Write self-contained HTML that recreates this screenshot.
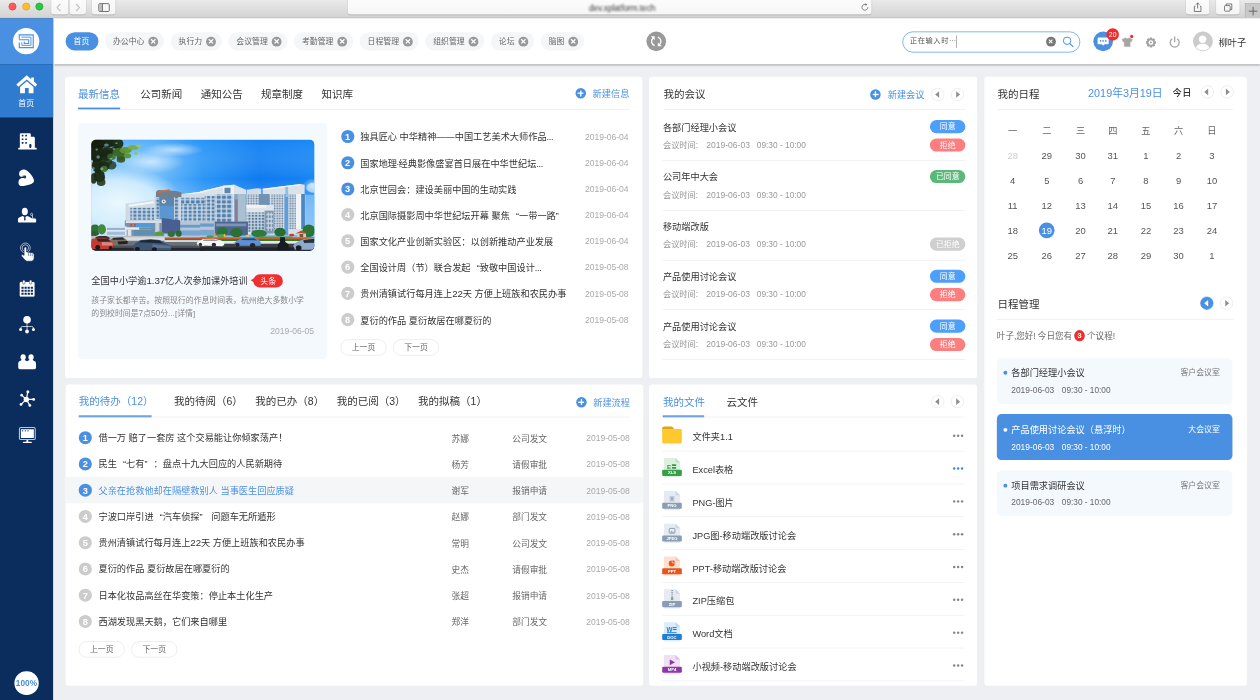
<!DOCTYPE html>
<html lang="zh-CN">
<head>
<meta charset="utf-8">
<title>首页</title>
<style>
*{box-sizing:border-box;margin:0;padding:0}
html,body{width:1260px;height:700px;overflow:hidden;background:#eeeff2}
body{font-family:"Liberation Sans","Noto Sans CJK SC",sans-serif;color:#333;font-size:14px;-webkit-font-smoothing:antialiased}
#app{position:absolute;left:0;top:0;width:1920px;height:1067px;transform:scale(.65625);transform-origin:0 0;background:#eeeff2;overflow:hidden}
.abs{position:absolute}
svg{display:block;overflow:visible}
svg text{font-family:"Liberation Sans","Noto Sans CJK SC",sans-serif}
/* chrome */
#chrome{position:absolute;left:0;top:0;width:1920px;height:27.4px;background:linear-gradient(#ebeaeb,#d5d4d5);border-bottom:1.2px solid #bcbbbc;z-index:30}
#chrome .tl{position:absolute;top:4px;width:12px;height:12px;border-radius:50%}
#chrome .btn{position:absolute;top:-6px;height:28.6px;border-radius:6px;background:linear-gradient(#fdfdfd,#f4f4f4);border:1px solid #d2d2d2;border-bottom-color:#b9b9b9;box-shadow:0 .6px 1px rgba(0,0,0,.12)}
#chrome .url{position:absolute;left:529px;top:-6px;width:800px;height:28.6px;border-radius:6px;background:linear-gradient(#fdfdfd,#f6f6f6);border:1px solid #d2d2d2;border-bottom-color:#b9b9b9;box-shadow:0 .6px 1px rgba(0,0,0,.12);text-align:center;font-size:12.5px;line-height:22px;color:#333}
#chrome .url span{filter:blur(1.3px);position:relative;top:5.5px;left:19px}
/* sidebar */
#side{position:absolute;left:0;top:28px;width:80.5px;height:1040px;background:#0a2d5e;z-index:20;box-shadow:1.6px 0 0 #fbfaf9}
#side .logo{position:absolute;left:0;top:0;width:80.5px;height:70px;background:#4a90e2}
#side .home{position:absolute;left:0;top:70px;width:80.5px;height:81px;background:#2f7bd0}
#side .home span{position:absolute;left:0;top:52px;width:80px;text-align:center;color:#fff;font-size:12px;line-height:16px}
#side .ic{position:absolute;left:0;width:80px;height:56px}
#side .ic svg{position:absolute;left:26px;top:14px}
#side .pct{position:absolute;left:22px;top:994.5px;width:36.6px;height:36.6px;border-radius:50%;background:#fff;color:#4a90e2;font-size:12.6px;font-weight:bold;text-align:center;line-height:37px}
/* topbar */
#top{position:absolute;left:80px;top:28px;width:1840px;height:70px;background:#fff;box-shadow:0 1px 3px rgba(0,0,0,.42);z-index:10}
.pill{position:absolute;top:21px;height:28px;border-radius:14px;background:#f5f6f8;color:#666;font-size:12px;line-height:28px;padding-left:12px;white-space:nowrap}
.pill.on{background:#4a90e2;color:#fff}
.pill i{position:absolute;right:9.5px;top:6.5px;width:15px;height:15px;border-radius:50%;background:#999}
.pill i:before,.pill i:after{content:"";position:absolute;left:3px;top:6.75px;width:9px;height:1.5px;background:#fff;transform:rotate(45deg)}
.pill i:after{transform:rotate(-45deg)}
/* cards */
.card{position:absolute;background:#fff;border-radius:5px}
.hline{position:absolute;left:20px;right:20px;top:49px;height:1px;background:#e8eaed}
.tab{position:absolute;top:0;height:50px;line-height:54px;font-size:16px;color:#333;white-space:nowrap}
.tab.on{color:#4a90e2}
.tab.on:after{content:"";position:absolute;left:0;right:0;bottom:0;height:3px;background:#3f88e0}
.newlink{position:absolute;top:0;height:50px;line-height:54px;font-size:14px;color:#4a90e2;white-space:nowrap}
.plus{position:absolute;top:18.5px;width:16px;height:16px;border-radius:50%;background:#4a90e2}
.plus:before,.plus:after{content:"";position:absolute;background:#fff}
.plus:before{left:3.5px;top:7px;width:9px;height:2px}
.plus:after{left:7px;top:3.5px;width:2px;height:9px}
.arr{position:absolute;width:20px;height:20px;border-radius:50%;background:#fff;border:1px solid #e3e5e8}
.arr:after{content:"";position:absolute;top:4px;border:5px solid transparent}
.arr.l:after{border-right:6.5px solid #8e8e8e;border-left-width:0;left:4.5px}
.arr.r:after{left:7px;border-left:6.5px solid #8e8e8e;border-right-width:0}
.arr.fill{background:#4a90e2;border-color:#4a90e2}
.arr.fill.l:after{border-right-color:#fff}
.num{position:absolute;width:20px;height:20px;border-radius:50%;background:#ccc;color:#fff;font-size:14px;font-weight:bold;text-align:center;line-height:20px}
.num.b{background:#4a90e2}
.row{position:absolute;left:0;right:0;height:40px;line-height:40px;white-space:nowrap}
.row .t{position:absolute;font-size:14px;color:#333}
.row .d{position:absolute;right:21px;top:.3px;font-size:13px;color:#aaa}
.pg{display:block;position:absolute;width:70px;height:24.5px;border:1px solid #e3e5e8;border-radius:12px;font-size:12px;color:#666;text-align:center;line-height:22px;background:#fff}
.q{display:inline-block;width:1em}
.q.l{text-align:right}
.el{letter-spacing:-.6px}
.dg{font-size:1.06em;line-height:1;letter-spacing:-.15px}
a{text-decoration:none}
button{font-family:inherit;padding:0;margin:0;border:0;cursor:pointer;-webkit-appearance:none;appearance:none;display:block}
.mb{right:0;width:54px;height:20px;border-radius:10px;color:#fff;font-size:12px;line-height:20px;text-align:center}

</style>
</head>
<body>
<div id="app">

<div id="chrome">
  <div class="tl" style="left:13px;background:#fc5b57;border:.5px solid #e2463f"></div>
  <div class="tl" style="left:33.5px;background:#fdbc2e;border:.5px solid #dfa023"></div>
  <div class="tl" style="left:53.5px;background:#28c840;border:.5px solid #1fa82f"></div>
  <div class="btn" style="left:77px;width:27.5px">
    <svg width="24" height="24" viewBox="0 0 24 24" style="position:absolute;left:0;top:4px"><path d="M14 7 L9 12.5 L14 18" fill="none" stroke="#bdbdbd" stroke-width="1.6"/></svg>
  </div>
  <div class="btn" style="left:104.5px;width:27.5px">
    <svg width="24" height="24" viewBox="0 0 24 24" style="position:absolute;left:0;top:4px"><path d="M10 7 L15 12.5 L10 18" fill="none" stroke="#bdbdbd" stroke-width="1.6"/></svg>
  </div>
  <div class="btn" style="left:138.5px;width:38.5px">
    <svg width="35" height="24" viewBox="0 0 35 24" style="position:absolute;left:0;top:4px"><rect x="10.5" y="6.5" width="16" height="12" rx="1.5" fill="none" stroke="#666" stroke-width="1.4"/><rect x="11.2" y="7.2" width="4.6" height="10.6" fill="#bbb"/><path d="M16.2 6.5 V18.5" stroke="#666" stroke-width="1.3"/></svg>
  </div>
  <div class="url"><span>dev.xplatform.tech</span>
    <svg width="14" height="14" viewBox="0 0 14 14" style="position:absolute;right:3.5px;top:8.5px"><path d="M11.5 7 A4.5 4.5 0 1 1 9.2 3.1" fill="none" stroke="#666" stroke-width="1.2"/><path d="M8 0.8 L10.6 3.2 L7.6 4.6 Z" fill="#666"/></svg>
  </div>
  <div class="btn" style="left:1806px;width:38px">
    <svg width="34" height="24" viewBox="0 0 34 24" style="position:absolute;left:1px;top:4px"><path d="M13.5 10.5 H12 V18.5 H22 V10.5 H20.5" fill="none" stroke="#666" stroke-width="1.3"/><path d="M17 14 V5.5 M14.5 8 L17 5.3 L19.5 8" fill="none" stroke="#666" stroke-width="1.3"/></svg>
  </div>
  <div class="btn" style="left:1852px;width:38px">
    <svg width="34" height="24" viewBox="0 0 34 24" style="position:absolute;left:1px;top:4px"><rect x="12" y="9.5" width="8.5" height="8.5" rx="1" fill="none" stroke="#666" stroke-width="1.3"/><path d="M14.5 9.5 V7 H23 V15.5 H20.5" fill="none" stroke="#666" stroke-width="1.3"/></svg>
  </div>
  <div style="position:absolute;left:1897px;top:5px;width:23px;height:22px;background:#c9c8c9;border:1px solid #b4b3b4;border-right:0;border-bottom:0">
    <svg width="22" height="21" viewBox="0 0 22 21" style="position:absolute;left:0;top:0"><path d="M5 11 H18 M11.5 4.5 V17.5" stroke="#666" stroke-width="1.5"/></svg>
  </div>
</div>

<aside id="side">
<div class="logo"><svg width="80" height="70" viewBox="0 0 80 70"><g transform="translate(6.095 5.524) scale(0.20434)">
<circle cx="165" cy="143" r="98" fill="#fff"/>
<g fill="none" stroke="#4a90e2" stroke-width="8.5">
<path d="M114 124 V96 H218 V191 H114 V152"/>
<path d="M130 113 H201 V174 H133 V152" stroke-width="7"/>
<path d="M110 132 H184 V160 H151 V146" stroke-width="8"/>
</g></g></svg></div>
<div class="home"><svg width="80" height="90" viewBox="0 0 80 90" style="position:absolute;left:0;top:-70px"><g transform="translate(6.095 5.524) scale(0.20434)" fill="#fff">
<path d="M170 397 L92 466 L107 483 L170 428 L233 483 L248 466 L223 444 V414 H203 V427 Z"/>
<path d="M170 441 L120 485 V531 H156 V492 H184 V531 H220 V485 Z"/></g></svg><span>首页</span></div>
<svg class="abs" style="left:15.24px;top:162.48px" width="51.81" height="106.67" viewBox="0 0 340 700"><path fill="#fff" d="M100 236 V97 Q100 85 112 85 H198 Q210 85 210 97 V120 H238 Q250 120 250 132 V236 Z"/><rect x="84" y="231" width="185" height="18" rx="5" fill="#fff"/><g fill="#0a2d5e"><rect x="119" y="100" width="17" height="17" rx="4"/><rect x="154" y="100" width="17" height="17" rx="4"/><rect x="119" y="137" width="17" height="17" rx="4"/><rect x="154" y="137" width="17" height="17" rx="4"/><rect x="119" y="174" width="17" height="17" rx="4"/><rect x="154" y="174" width="17" height="17" rx="4"/><rect x="194" y="194" width="22" height="38" rx="8"/></g><path fill="#fff" d="M93 482 C96 458 128 442 152 450 C188 462 228 510 241 552 C247 574 228 588 200 597 C170 608 122 617 102 611 C84 604 82 568 95 549 C105 535 126 530 147 536 C152 528 153 520 150 513 C140 519 124 523 111 520 C95 515 90 499 93 482 Z"/><path fill="#0a2d5e" d="M122 512 C136 506 150 505 160 511 L163 528 C158 538 150 540 146 536 C150 528 150 521 147 516 C140 519 130 518 122 512 Z"/></svg>
<svg class="abs" style="left:15.24px;top:276.76px" width="51.81" height="106.67" viewBox="0 0 340 700"><ellipse cx="150" cy="113" rx="30" ry="38" fill="#fff"/><path fill="#fff" d="M81 214 V192 C81 176 100 170 128 158 L150 172 L172 158 C196 166 212 174 224 184 H252 Q263 184 263 194 V214 Q263 223 254 223 H90 Q81 223 81 214 Z"/><path fill="#0a2d5e" d="M145 168 H155 L158 196 L150 205 L142 196 Z"/><circle cx="218" cy="142" r="11" fill="none" stroke="#fff" stroke-width="6"/><path d="M224 152 L231 186" stroke="#fff" stroke-width="7" stroke-linecap="round"/><circle cx="155" cy="478" r="49" fill="none" stroke="#fff" stroke-width="6"/><circle cx="155" cy="478" r="32" fill="none" stroke="#fff" stroke-width="6"/><path fill="#fff" stroke="#0a2d5e" stroke-width="7" stroke-linejoin="round" d="M142 482 Q142 468 155 468 Q168 468 168 482 V518 L226 526 Q243 530 243 546 V582 Q240 611 214 611 H176 Q160 611 150 599 L118 561 Q111 548 124 544 Q134 543 142 553 Z"/><path d="M186 528 V558 M206 530 V560 M224 534 V562" stroke="#0a2d5e" stroke-width="5"/></svg>
<svg class="abs" style="left:15.24px;top:383.43px" width="51.81" height="106.67" viewBox="0 0 340 700"><rect x="100" y="124" width="146" height="145" rx="12" fill="#fff"/><rect x="100" y="124" width="146" height="145" rx="12" fill="none" stroke="#fff" stroke-width="4" opacity=".6"/><g fill="#0a2d5e"><rect x="116" y="171" width="22" height="19" rx="2"/><rect x="147" y="171" width="22" height="19" rx="2"/><rect x="178" y="171" width="22" height="19" rx="2"/><rect x="209" y="171" width="22" height="19" rx="2"/><rect x="116" y="201" width="22" height="19" rx="2"/><rect x="147" y="201" width="22" height="19" rx="2"/><rect x="178" y="201" width="22" height="19" rx="2"/><rect x="209" y="201" width="22" height="19" rx="2"/><rect x="116" y="231" width="22" height="19" rx="2"/><rect x="147" y="231" width="22" height="19" rx="2"/><rect x="178" y="231" width="22" height="19" rx="2"/><rect x="209" y="231" width="22" height="19" rx="2"/></g><g stroke="#0a2d5e" stroke-width="5" fill="#fff"><rect x="128" y="104" width="24" height="40" rx="12"/><rect x="196" y="104" width="24" height="40" rx="12"/></g><circle cx="172" cy="500" r="38" fill="#fff"/><path d="M172 530 V605 M109 592 V585 Q109 568 126 568 H218 Q236 568 236 585 V592" fill="none" stroke="#fff" stroke-width="7"/><circle cx="108" cy="598" r="15" fill="#fff"/><circle cx="172" cy="618" r="19" fill="#fff"/><circle cx="236" cy="598" r="15" fill="#fff"/></svg>
<svg class="abs" style="left:15.24px;top:490.10px" width="51.81" height="106.67" viewBox="0 0 340 700"><ellipse cx="133" cy="173" rx="26" ry="31" fill="#fff"/><ellipse cx="212" cy="173" rx="26" ry="31" fill="#fff"/><path fill="#fff" d="M84 276 V232 Q84 214 102 210 L118 200 H148 L172 214 L196 200 H228 L244 210 Q262 214 262 232 V276 Q262 292 246 292 H100 Q84 292 84 276 Z"/><path d="M165 595 L180 518 M165 595 L118 552 M165 595 L238 595 M165 595 L112 645 M165 595 L200 655" stroke="#fff" stroke-width="12" fill="none"/><circle cx="165" cy="595" r="27" fill="#fff"/><circle cx="180" cy="518" r="15" fill="#fff"/><circle cx="118" cy="552" r="13" fill="#fff"/><circle cx="238" cy="595" r="14" fill="#fff"/><circle cx="112" cy="645" r="14" fill="#fff"/><circle cx="200" cy="655" r="14" fill="#fff"/></svg>
<svg class="abs" style="left:15.24px;top:596.76px" width="51.81" height="106.67" viewBox="0 0 340 700"><rect x="96" y="174" width="158" height="120" rx="14" fill="none" stroke="#fff" stroke-width="11" opacity=".72"/><rect x="110" y="190" width="130" height="88" rx="3" fill="#fff"/><circle cx="128" cy="207" r="7" fill="#0a2d5e"/><circle cx="155" cy="207" r="7" fill="#0a2d5e"/><circle cx="182" cy="207" r="7" fill="#0a2d5e"/><rect x="166" y="298" width="18" height="24" fill="#fff"/><rect x="130" y="316" width="90" height="13" rx="6" fill="#fff"/></svg>
<div class="pct">100%</div>
</aside>

<header id="top">
<a href="#" class="pill on" style="left:20px;width:50px">首页</a>
<a href="#" class="pill" style="left:80px;width:90px">办公中心<i></i></a>
<a href="#" class="pill" style="left:180px;width:78px">执行力<i></i></a>
<a href="#" class="pill" style="left:268px;width:90px">会议管理<i></i></a>
<a href="#" class="pill" style="left:368px;width:90px">考勤管理<i></i></a>
<a href="#" class="pill" style="left:468px;width:90px">日程管理<i></i></a>
<a href="#" class="pill" style="left:568px;width:90px">组织管理<i></i></a>
<a href="#" class="pill" style="left:668px;width:66px">论坛<i></i></a>
<a href="#" class="pill" style="left:744px;width:66px">脑图<i></i></a>

<div class="abs" style="left:905px;top:20px;width:30px;height:30px;border-radius:50%;background:#999">
  <svg width="30" height="30" viewBox="0 0 30 30"><g transform="rotate(-90 15 15)"><path d="M8.4 12.6 A7 7 0 0 1 20.2 10.2 M21.6 17.4 A7 7 0 0 1 9.8 19.8" fill="none" stroke="#fff" stroke-width="2"/><path d="M22.6 6.6 V12.6 H16.6 Z M7.4 23.4 V17.4 H13.4 Z" fill="#fff"/></g></svg>
</div>
<div class="abs" style="left:1295px;top:20px;width:271px;height:32px;border-radius:16px;border:1.5px solid #4a90e2;background:#fff">
  <span class="abs" style="left:10.5px;top:-1.2px;line-height:29px;font-size:11px;color:#555;letter-spacing:.9px;white-space:nowrap">正在输入时<span style="position:relative;top:-3px;letter-spacing:-.5px">…</span></span>
  <span class="abs" style="left:81px;top:4.5px;width:1px;height:19px;background:#888"></span>
  <span class="abs" style="left:218px;top:7px;width:14.5px;height:14.5px;border-radius:50%;background:#777"></span>
  <svg class="abs" style="left:218.2px;top:7.2px" width="14" height="14" viewBox="0 0 14 14"><path d="M4.3 4.3 L9.7 9.7 M9.7 4.3 L4.3 9.7" stroke="#fff" stroke-width="1.6"/></svg>
  <svg class="abs" style="left:241.5px;top:4.6px" width="19" height="19" viewBox="0 0 20 20"><circle cx="8.5" cy="8.5" r="6" fill="none" stroke="#4a90e2" stroke-width="1.6"/><path d="M13 13 L18 18" stroke="#4a90e2" stroke-width="1.8" stroke-linecap="round"/></svg>
</div>
<div class="abs" style="left:1585.6px;top:20.2px;width:30px;height:30px;border-radius:50%;background:#4a90e2">
  <svg width="30" height="30" viewBox="0 0 30 30"><path d="M8.2 9 H21.8 Q23.4 9 23.4 10.6 V18 Q23.4 19.6 21.8 19.6 H17 L15 21.8 L13 19.6 H8.2 Q6.6 19.6 6.6 18 V10.6 Q6.6 9 8.2 9 Z" fill="#fff"/><rect x="10" y="13" width="2" height="2.8" rx=".6" fill="#4a90e2"/><rect x="14" y="13" width="2" height="2.8" rx=".6" fill="#4a90e2"/><rect x="18" y="13" width="2" height="2.8" rx=".6" fill="#4a90e2"/></svg>
</div>
<div class="abs" style="left:1606px;top:15.3px;width:19px;height:19px;border-radius:50%;background:#f02b2b;color:#fff;font-size:10.5px;line-height:19px;text-align:center">20</div>
<svg class="abs" style="left:1629px;top:28.4px" width="18" height="16.5" viewBox="0 0 24 22"><path d="M8 2 C9 4.5 14 4.5 15 2 L22 5.5 L19.5 10.5 L17.5 9.6 V20 H5.5 V9.6 L3.5 10.5 L1 5.5 Z" fill="#a5a5a5" stroke="#a5a5a5" stroke-width="1" stroke-linejoin="round"/></svg>
<div class="abs" style="left:1641.7px;top:25px;width:5.2px;height:5.2px;border-radius:50%;background:#f02b2b"></div>
<svg class="abs" style="left:1665.1px;top:27.6px" width="17.6" height="17.6" viewBox="0 0 22 22"><path d="M17.42 9.46 L19.49 9.65 L19.49 12.35 L17.42 12.54 L16.63 14.45 L17.96 16.05 L16.05 17.96 L14.45 16.63 L12.54 17.42 L12.35 19.49 L9.65 19.49 L9.46 17.42 L7.55 16.63 L5.95 17.96 L4.04 16.05 L5.37 14.45 L4.58 12.54 L2.51 12.35 L2.51 9.65 L4.58 9.46 L5.37 7.55 L4.04 5.95 L5.95 4.04 L7.55 5.37 L9.46 4.58 L9.65 2.51 L12.35 2.51 L12.54 4.58 L14.45 5.37 L16.05 4.04 L17.96 5.95 L16.63 7.55 Z" fill="#a3a3a3" stroke="#a3a3a3" stroke-width="2.2" stroke-linejoin="round"/><circle cx="11" cy="11" r="4.5" fill="#fff"/><circle cx="11" cy="11" r="1.9" fill="#a3a3a3"/></svg>
<svg class="abs" style="left:1699.6px;top:25.8px" width="20" height="19.6" preserveAspectRatio="none" viewBox="0 0 22 22"><path d="M6.4 6.2 A7.6 7.6 0 1 0 15.6 6.2" fill="none" stroke="#a3a3a3" stroke-width="2.1" stroke-linecap="round"/><path d="M11 2.4 V10.6" stroke="#a3a3a3" stroke-width="2.1" stroke-linecap="round"/></svg>
<div class="abs" style="left:1738px;top:20px;width:30px;height:30px;border-radius:50%;background:#ccc;overflow:hidden;border:1.5px solid #c4c4c4">
  <svg width="27" height="27" viewBox="0 0 30 30"><circle cx="15" cy="12" r="6.2" fill="#fff"/><path d="M3 31 C3 22 9 19.5 15 19.5 C21 19.5 27 22 27 31 Z" fill="#fff"/></svg>
</div>
<div class="abs" style="left:1777px;top:0;line-height:74px;font-size:14px;color:#333;white-space:nowrap">柳叶子</div>
</header>

<section class="card" style="left:98.9px;top:117px;width:879.9px;height:459px">
<a href="#" class="tab on" style="left:20px">最新信息</a>
<a href="#" class="tab" style="left:115px">公司新闻</a>
<a href="#" class="tab" style="left:207px">通知公告</a>
<a href="#" class="tab" style="left:299px">规章制度</a>
<a href="#" class="tab" style="left:391px">知识库</a>
<div class="plus" style="left:777.9px;top:17.2px"></div><a href="#" class="newlink" style="left:804.1px;line-height:52.6px">新建信息</a>
<div class="hline"></div>
<div class="abs" style="left:20.3px;top:70px;width:379.3px;height:359.5px;border-radius:6px;background:#f4f9fe">
  <div class="abs" style="left:20px;top:26px;width:340px;height:169px;border-radius:7px;overflow:hidden;background:#6ab0ee"><svg width="340" height="169" viewBox="0 0 223 111" preserveAspectRatio="none">
<defs>
<linearGradient id="sky" x1="0" y1="0" x2="1" y2="0"><stop offset="0" stop-color="#8fcdfb"/><stop offset=".3" stop-color="#6fbcfa"/><stop offset=".5" stop-color="#2b96f6"/><stop offset=".75" stop-color="#0d7af0"/><stop offset="1" stop-color="#1684f3"/></linearGradient>
<linearGradient id="skyv" x1="0" y1="0" x2="0" y2="1"><stop offset="0" stop-color="#1a90fa" stop-opacity=".35"/><stop offset=".35" stop-color="#fff" stop-opacity="0"/><stop offset=".62" stop-color="#fff" stop-opacity=".3"/><stop offset="1" stop-color="#fff" stop-opacity=".55"/></linearGradient>
<radialGradient id="hz" cx=".5" cy=".5" r=".5"><stop offset="0" stop-color="#eaf8fe" stop-opacity="1"/><stop offset=".6" stop-color="#dff3fd" stop-opacity=".8"/><stop offset="1" stop-color="#d5effc" stop-opacity="0"/></radialGradient>
<radialGradient id="cl" cx=".5" cy=".5" r=".5"><stop offset="0" stop-color="#fff" stop-opacity=".6"/><stop offset="1" stop-color="#fff" stop-opacity="0"/></radialGradient>
<filter id="b1" x="-10%" y="-10%" width="120%" height="120%"><feGaussianBlur stdDeviation=".7"/></filter>
<filter id="b3" x="-5%" y="-5%" width="110%" height="110%"><feGaussianBlur stdDeviation=".3"/></filter>
<filter id="b2" x="-10%" y="-10%" width="120%" height="120%"><feGaussianBlur stdDeviation=".35"/></filter>
<pattern id="wA" width="4.6" height="3.7" patternUnits="userSpaceOnUse"><rect width="4.6" height="3.7" fill="#d3dde6"/><rect x=".7" y=".6" width="3.2" height="2.6" fill="#4f7fae"/></pattern>
<pattern id="wB" width="3.4" height="3.1" patternUnits="userSpaceOnUse"><rect width="3.4" height="3.1" fill="#d6dfe7"/><rect x=".6" y=".6" width="2.2" height="2.1" fill="#55789c"/></pattern>
<pattern id="wC" width="2.6" height="2.5" patternUnits="userSpaceOnUse"><rect width="2.6" height="2.5" fill="#e2e8ee"/><rect x=".5" y=".5" width="1.6" height="1.6" fill="#5d7a9a"/></pattern>
<pattern id="wD" width="5.2" height="4.6" patternUnits="userSpaceOnUse"><rect width="5.2" height="4.6" fill="#d0dae4"/><rect x=".7" y=".7" width="3.9" height="3.3" fill="#4f80b0"/></pattern>
<pattern id="wE" width="3" height="4.4" patternUnits="userSpaceOnUse"><rect width="3" height="4.4" fill="#cdd6de"/><rect x=".6" y=".8" width="1.8" height="2.8" fill="#6a8fae"/></pattern>
</defs>
<rect width="223" height="111" fill="url(#sky)"/>
<rect width="223" height="111" fill="url(#skyv)"/>
<ellipse cx="28" cy="62" rx="62" ry="36" fill="url(#hz)"/>
<ellipse cx="60" cy="22" rx="34" ry="12" fill="url(#cl)"/>
<ellipse cx="82" cy="10" rx="30" ry="7" fill="url(#cl)"/>
<ellipse cx="222" cy="46" rx="11" ry="8" fill="url(#cl)"/><ellipse cx="222" cy="48" rx="7" ry="5" fill="#fff" opacity=".5"/>
<rect x="205" y="55" width="18" height="40" fill="#9fd2f8" opacity=".55"/>

<g filter="url(#b3)">
<polygon points="171.4,49.1 209.1,44.3 213.3,45.1 213.3,57.2 171.4,57.2" fill="#dae2e9"/>
<rect x="178.8" y="54.3" width="35.0" height="40.5" fill="#dde4eb"/>
<rect x="179.7" y="54.3" width="12.4" height="38.7" fill="url(#wC)"/>
<rect x="193.0" y="54.3" width="4.1" height="41.0" fill="#5f9ed6"/>
<rect x="197.2" y="54.3" width="7.4" height="35.9" fill="url(#wC)"/>
<rect x="204.5" y="54.3" width="5.1" height="35.0" fill="#f1f4f6"/>
<rect x="209.9" y="54.3" width="3.7" height="35.0" fill="#4a86c4"/>
<rect x="197.2" y="89.3" width="12.9" height="5.5" fill="#d9dfe5"/>
<polygon points="171.4,49.1 209.1,44.3 209.1,45.4 171.4,50.2" fill="#f4f7f9"/>
<rect x="194.0" y="47.1" width="2.8" height="10.1" fill="#8fc0e6"/>
<polygon points="155.3,50.0 165.9,48.5 170.0,49.1 170.0,57.2 155.3,57.2" fill="#d3dce5"/>
<rect x="154.8" y="54.3" width="23.9" height="11.0" fill="url(#wC)"/>
<rect x="167.7" y="54.3" width="10.1" height="11.0" fill="#6f93b4"/>
<rect x="154.8" y="65.2" width="27.6" height="29.6" fill="#dfe5ea"/>
<rect x="155.3" y="72.7" width="18.0" height="19.3" fill="url(#wB)"/>
<rect x="173.2" y="70.9" width="9.2" height="23.0" fill="#7f9bb6"/>
<rect x="175.1" y="72.7" width="6.4" height="18.4" fill="url(#wE)"/>
<rect x="154.8" y="65.2" width="20.3" height="2.9" fill="#f0f3f5"/>
<polygon points="108.8,51.7 131.8,46.2 142.9,44.8 147.5,47.1 154.8,49.9 154.8,57.2 108.8,57.2" fill="#d9e1e9"/>
<polygon points="108.8,51.7 131.8,46.2 131.8,47.6 108.8,53.2" fill="#f5f7f9"/>
<rect x="131.8" y="45.7" width="11.0" height="11.5" fill="#eef2f5"/>
<rect x="133.2" y="48.0" width="6.0" height="5.5" fill="#5f87a6"/>
<rect x="108.8" y="54.3" width="34.1" height="30.4" fill="#d9e1e9"/>
<rect x="108.8" y="56.1" width="14.7" height="27.6" fill="url(#wA)"/>
<rect x="124.0" y="54.3" width="17.0" height="29.5" fill="url(#wD)"/>
<rect x="142.9" y="54.3" width="12.0" height="36.8" fill="#8ea7be"/>
<rect x="143.8" y="59.8" width="3.7" height="22.1" fill="#8a4a4a" opacity=".45"/>
<rect x="146.5" y="54.3" width="7.8" height="30.4" fill="#a9bfd2"/>
<polygon points="90.2,54.5 113.0,51.5 113.0,57.7 90.2,57.7" fill="#d9e1e9"/>
<polygon points="90.2,54.5 113.0,51.5 113.0,52.6 90.2,55.6" fill="#f5f7f9"/>
<rect x="88.9" y="54.3" width="24.4" height="27.6" fill="#d9e1e9"/>
<rect x="89.8" y="58.0" width="23.5" height="7.4" fill="url(#wD)"/>
<rect x="89.8" y="64.4" width="23.5" height="17.5" fill="url(#wA)"/>
<rect x="88.9" y="54.3" width="24.4" height="2.8" fill="#d3dce5"/>
<rect x="75.1" y="81.9" width="38.2" height="15.2" fill="#b7c5d4"/>
<rect x="76.0" y="85.1" width="37.3" height="2.8" fill="#6b9ccb"/>
<rect x="76.0" y="90.7" width="37.3" height="5.1" fill="#78a6d2"/>
<rect x="108.8" y="81.9" width="14.7" height="14.7" fill="#b7c5d4"/>
<rect x="108.8" y="83.8" width="13.8" height="3.2" fill="#6b9ccb"/>
<rect x="108.8" y="90.2" width="13.8" height="5.5" fill="#78a6d2"/>
<rect x="123.5" y="81.9" width="33.1" height="13.8" fill="#50658f"/>
<rect x="124.5" y="83.8" width="30.4" height="2.8" fill="#7f93b5"/>
<polygon points="63.1,57.1 67.7,54.3 88.9,54.3 88.9,81.9 63.1,81.9" fill="#d3dce5"/>
<rect x="68.1" y="56.1" width="14.7" height="23.5" fill="#5a96cf"/>
<rect x="68.1" y="56.1" width="14.7" height="10.1" fill="#5a86ae"/>
<rect x="64.0" y="58.0" width="3.7" height="21.2" fill="url(#wA)"/>
<rect x="83.3" y="55.2" width="4.6" height="24.9" fill="url(#wA)"/>
<polygon points="64.7,52.2 66.8,50.3 85.2,51.2 90.2,52.6 90.2,57.2 64.7,57.2" fill="#6f7f8f"/>
<polygon points="65.4,51.7 78.7,49.5 78.9,51.0 65.7,53.4" fill="#d8693a"/>
<ellipse cx="72.5" cy="61.7" rx="2.0" ry="2.0" fill="#f2f4f6"/>
<ellipse cx="72.5" cy="61.7" rx="0.9" ry="0.9" fill="#e0453a"/>
<polygon points="34.5,64.0 63.1,59.8 63.1,81.9 34.5,81.9" fill="#d3dce5"/>
<polygon points="35.9,65.3 62.6,61.5 62.6,63.5 35.9,67.2" fill="#f3f6f8"/>
<rect x="39.1" y="68.1" width="23.9" height="12.0" fill="url(#wA)"/>
<rect x="34.5" y="64.0" width="2.8" height="21.6" fill="#cfd8e0"/>
<rect x="33.6" y="80.5" width="36.8" height="15.7" fill="#7d90a8"/>
<rect x="34.5" y="80.5" width="35.9" height="2.8" fill="#d8dfe6"/>
<rect x="44.7" y="83.6" width="17.5" height="4.3" fill="#4f9bd8"/>
<rect x="42.8" y="89.7" width="20.3" height="6.4" fill="#5f8fb0"/>
<rect x="32.7" y="87.6" width="27.6" height="2.4" fill="#e9edf0"/>
<rect x="47.9" y="87.6" width="13.3" height="2.4" fill="#7b8794"/>
<rect x="36.4" y="90.0" width="3.7" height="6.2" fill="#dfe4e8"/>
<rect x="64.0" y="82.8" width="4.1" height="10.1" fill="#c9d2da"/>
<rect x="39.1" y="84.2" width="1.8" height="2.8" fill="#c0504a"/>
<rect x="42.8" y="84.2" width="1.8" height="2.8" fill="#c0504a"/>
<polygon points="70.5,78.4 88.9,80.5 88.9,93.9 70.5,93.9" fill="#4a5f90"/>
<rect x="14.8" y="86.7" width="20.7" height="9.5" fill="#e1e7ec"/>
<rect x="15.7" y="88.2" width="18.0" height="2.0" fill="#8fb0d6"/>
<rect x="15.7" y="92.0" width="18.0" height="3.2" fill="#9fc0e0"/>
</g>
<g filter="url(#b2)">
<ellipse cx="3.7" cy="89.3" rx="5.1" ry="4.4" fill="#2f6f35"/>
<ellipse cx="10.6" cy="89.7" rx="4.1" ry="5.1" fill="#3f8a45"/>
<ellipse cx="2.3" cy="93.9" rx="5.5" ry="2.6" fill="#2a5f30"/>
<ellipse cx="68.1" cy="94.3" rx="5.1" ry="2.6" fill="#5a9a4a"/>
<ellipse cx="80.1" cy="94.3" rx="3.5" ry="2.9" fill="#2f7038"/>
<ellipse cx="87.5" cy="93.9" rx="2.9" ry="3.2" fill="#2a6a33"/>
<ellipse cx="130.9" cy="92.0" rx="5.5" ry="4.6" fill="#2c7436"/>
<ellipse cx="145.2" cy="93.0" rx="6.3" ry="4.6" fill="#2a6f34"/>
<ellipse cx="167.7" cy="93.9" rx="7.8" ry="3.9" fill="#2f7a3a"/>
<ellipse cx="188.7" cy="92.5" rx="5.7" ry="4.4" fill="#2a6d33"/>
<ellipse cx="217.4" cy="91.1" rx="6.4" ry="6.4" fill="#2c7436"/>
<ellipse cx="118.9" cy="96.8" rx="3.7" ry="1.3" fill="#4f9a48"/>
<ellipse cx="130.0" cy="96.2" rx="4.1" ry="1.8" fill="#5aa34d"/>
<polygon points="204.1,93.9 210.1,90.9 216.5,93.9" fill="#b5532c"/>
<rect x="205.9" y="93.9" width="8.7" height="3.7" fill="#d9cfc0"/>
<rect x="208.2" y="94.3" width="3.7" height="3.2" fill="#6b5a4a"/>
<ellipse cx="200.4" cy="95.3" rx="2.6" ry="1.3" fill="#d8362c"/>
<ellipse cx="123.5" cy="94.8" rx="0.9" ry="2.0" fill="#d8a020"/>
<ellipse cx="133.2" cy="95.7" rx="0.9" ry="1.7" fill="#e8c030"/>
<ellipse cx="156.2" cy="96.2" rx="2.0" ry="1.1" fill="#e8c030"/>
<rect x="73.2" y="97.8" width="40.0" height="2.6" fill="#c8502c"/>
<rect x="73.2" y="99.2" width="40.0" height="1.5" fill="#3f7f2f"/>
<rect x="108.8" y="97.6" width="114.2" height="2.5" fill="#cf5a2c"/>
<rect x="108.8" y="99.4" width="114.2" height="2.0" fill="#3a7a2c"/>
<rect x="167.7" y="96.8" width="33.1" height="1.7" fill="#4f9a3f"/>
</g>
<rect x="0.0" y="96.2" width="73.2" height="6.0" fill="#b9bec5"/>
<rect x="31.8" y="97.6" width="41.4" height="2.8" fill="#d9dcdf"/>
<rect x="0.0" y="101.7" width="113.2" height="10.1" fill="#4a4f58"/>
<rect x="108.8" y="101.3" width="114.2" height="3.2" fill="#e4e6e8"/>
<rect x="73.2" y="100.6" width="40.0" height="1.7" fill="#e4e6e8"/>
<rect x="108.8" y="104.0" width="114.2" height="7.8" fill="#3a3e46"/>
<rect x="0.0" y="108.2" width="113.2" height="3.7" fill="#25282e"/>
<rect x="108.8" y="107.7" width="114.2" height="4.1" fill="#1f2227"/>
<rect x="21.7" y="102.2" width="91.6" height="3.7" fill="#6b7079"/>
<g filter="url(#b2)">
<polygon points="18.9,100.3 21.7,98.0 31.8,97.6 35.5,100.3 36.4,103.6 34.5,104.8 19.8,104.5" fill="#7a6f62"/>
<polygon points="22.1,98.3 31.3,97.9 33.6,100.0 20.9,100.1" fill="#2a2c33"/>
<polygon points="26.3,101.7 36.4,101.3 36.4,104.0 27.2,104.8" fill="#1f2025"/>
<polygon points="4.2,97.6 7.8,96.2 15.2,96.2 18.4,98.0 18.4,99.9 4.2,99.9" fill="#3a3038"/>
<polygon points="0.0,99.9 2.3,98.7 16.1,98.7 19.8,101.4 21.8,103.1 21.8,107.7 19.8,109.4 0.0,109.4" fill="#c53a32"/>
<polygon points="5.5,99.4 16.6,99.4 19.4,101.7 6.9,102.0" fill="#3a2428"/>
<polygon points="10.6,102.2 21.2,102.9 21.5,105.9 10.6,105.7" fill="#e8c8c0" opacity=".55"/>
<ellipse cx="6.5" cy="107.7" rx="2.4" ry="2.4" fill="#1a1a1e"/>
<ellipse cx="19.4" cy="108.2" rx="1.8" ry="2.0" fill="#1a1a1e"/>
<polygon points="41.9,105.9 44.7,103.1 49.3,100.3 59.4,99.6 68.6,100.3 73.2,103.1 79.2,105.9 80.1,109.1 78.7,110.6 42.8,110.6" fill="#3d5472"/>
<polygon points="47.4,102.6 50.7,100.8 59.4,100.1 67.7,100.8 71.8,103.6" fill="#1c2735"/>
<polygon points="61.2,104.5 78.7,106.0 79.7,108.6 61.2,108.2" fill="#5a7392"/>
<ellipse cx="46.1" cy="109.4" rx="2.6" ry="2.0" fill="#14181e"/>
<ellipse cx="63.1" cy="109.5" rx="2.6" ry="2.0" fill="#14181e"/>
<polygon points="108.8,101.3 111.6,99.2 122.6,99.0 130.0,100.8 132.9,102.6 132.9,105.4 130.9,106.6 108.8,105.9" fill="#f4f5f7"/>
<polygon points="105.4,103.1 108.2,101.4 113.3,101.1 113.3,106.0 106.4,105.7" fill="#f4f5f7"/>
<polygon points="112.5,99.9 122.6,99.6 127.7,101.3 111.6,101.4" fill="#8f979f"/>
<ellipse cx="122.6" cy="105.1" rx="2.2" ry="2.0" fill="#2a2c30"/>
<ellipse cx="109.1" cy="104.8" rx="1.7" ry="1.7" fill="#2a2c30"/>
<polygon points="142.9,103.1 145.6,100.8 151.1,98.3 163.1,97.9 167.7,100.3 169.6,103.1 169.1,106.0 143.8,106.0" fill="#5f90d2"/>
<polygon points="149.3,100.3 152.1,98.7 162.7,98.5 165.9,100.5" fill="#2c4668"/>
<ellipse cx="146.1" cy="105.1" rx="2.2" ry="2.0" fill="#22252b"/>
<ellipse cx="161.3" cy="105.5" rx="2.6" ry="2.2" fill="#22252b"/>
<polygon points="188.9,97.6 193.5,97.6 194.0,102.2 197.2,104.5 197.6,110.6 186.1,110.6 186.6,104.5 188.7,102.2" fill="#161a22"/>
<polygon points="201.8,105.9 205.5,102.2 212.8,99.4 223.0,98.3 223.0,110.0 203.6,110.0" fill="#8ea9cf"/>
<polygon points="211.9,100.3 223.0,99.0 223.0,103.1 212.8,103.3" fill="#27303c"/>
<ellipse cx="207.3" cy="108.2" rx="2.9" ry="2.6" fill="#1c1e22"/>
</g>
<g filter="url(#b1)">
<ellipse cx="5.3" cy="3.9" rx="8.7" ry="6.0" fill="#121c0e" opacity="1.00"/>
<ellipse cx="17.5" cy="3.0" rx="9.8" ry="4.3" fill="#16230f" opacity="0.97"/>
<ellipse cx="26.8" cy="3.9" rx="5.4" ry="4.9" fill="#1d2e14" opacity="0.95"/>
<ellipse cx="5.3" cy="14.3" rx="7.6" ry="7.6" fill="#15210f" opacity="0.98"/>
<ellipse cx="15.6" cy="12.4" rx="7.6" ry="5.4" fill="#1b2b13" opacity="0.95"/>
<ellipse cx="7.1" cy="25.5" rx="6.5" ry="7.6" fill="#18260f" opacity="0.97"/>
<ellipse cx="15.6" cy="21.8" rx="5.4" ry="4.9" fill="#2a4519" opacity="0.90"/>
<ellipse cx="8.1" cy="35.9" rx="5.4" ry="6.5" fill="#1a2a11" opacity="0.95"/>
<ellipse cx="9.9" cy="42.4" rx="4.3" ry="3.8" fill="#22381a" opacity="0.90"/>
<ellipse cx="2.4" cy="38.7" rx="3.3" ry="5.4" fill="#1a2a11" opacity="0.90"/>
<ellipse cx="14.6" cy="15.2" rx="6.5" ry="6.0" fill="#1a2813" opacity="0.85"/>
<ellipse cx="20.3" cy="25.5" rx="4.9" ry="4.3" fill="#22361a" opacity="0.80"/>
<ellipse cx="25.0" cy="10.5" rx="5.4" ry="4.3" fill="#1c2c14" opacity="0.85"/>
<ellipse cx="12.8" cy="26.5" rx="5.4" ry="4.9" fill="#1a2813" opacity="0.85"/>
<ellipse cx="9.0" cy="37.7" rx="4.9" ry="4.3" fill="#1e3016" opacity="0.85"/>
<ellipse cx="29.7" cy="17.1" rx="4.3" ry="3.8" fill="#2a4519" opacity="0.80"/>
<ellipse cx="27.8" cy="12.4" rx="6.5" ry="4.3" fill="#3d6a24" opacity="0.95"/>
<ellipse cx="34.4" cy="10.5" rx="6.0" ry="3.3" fill="#5f9432" opacity="0.95"/>
<ellipse cx="41.9" cy="7.7" rx="5.4" ry="2.4" fill="#79ad3c" opacity="0.90"/>
<ellipse cx="47.5" cy="6.3" rx="3.0" ry="1.3" fill="#9ccc50" opacity="0.85"/>
<ellipse cx="36.2" cy="16.1" rx="3.8" ry="2.7" fill="#5a8f30" opacity="0.90"/>
<ellipse cx="29.7" cy="19.9" rx="4.3" ry="3.0" fill="#33581f" opacity="0.90"/>
<ellipse cx="20.3" cy="17.1" rx="4.3" ry="3.3" fill="#3c6a24" opacity="0.85"/>
<ellipse cx="12.8" cy="29.3" rx="3.3" ry="3.3" fill="#46762c" opacity="0.85"/>
<ellipse cx="44.7" cy="13.8" rx="1.7" ry="1.5" fill="#8fc24a" opacity="0.75"/>
<ellipse cx="15.2" cy="5.2" rx="2.4" ry="1.5" fill="#a9d8f6" opacity=".5"/>
<ellipse cx="6.9" cy="17.2" rx="1.8" ry="1.8" fill="#a9d8f6" opacity=".5"/>
<ellipse cx="10.6" cy="29.1" rx="1.7" ry="1.3" fill="#a9d8f6" opacity=".5"/>
<ellipse cx="5.5" cy="9.8" rx="1.3" ry="1.1" fill="#a9d8f6" opacity=".5"/>
<ellipse cx="19.8" cy="19.0" rx="1.5" ry="1.1" fill="#a9d8f6" opacity=".5"/>
<ellipse cx="25.3" cy="3.4" rx="1.3" ry="0.9" fill="#a9d8f6" opacity=".5"/>
<ellipse cx="2.3" cy="28.7" rx="1.1" ry="1.5" fill="#a9d8f6" opacity=".5"/>
<ellipse cx="22.6" cy="9.3" rx="1.3" ry="0.9" fill="#a9d8f6" opacity=".5"/>
</g>
</svg></div>
  <div class="abs" style="left:20px;top:229px;font-size:14px;line-height:24px;color:#333;white-space:nowrap">全国中小学逾<span class="dg">1.37</span>亿人次参加课外培训</div>
  <div class="abs" style="left:267px;top:230.5px;width:45px;height:20px;border-radius:10px;background:#f03030;color:#fff;font-size:12px;line-height:20px;text-align:center">头条</div>
  <div class="abs" style="left:263px;top:237px;width:0;height:0;border:3.5px solid transparent;border-right:5px solid #f03030;border-left-width:0"></div>
  <div class="abs" style="left:20px;top:260px;width:345px;font-size:12px;line-height:20px;color:#888">孩子家长都辛苦。按照现行的作息时间表，杭州绝大多数小学<br>的到校时间是<span class="dg">7</span>点<span class="dg">50</span>分<span style="letter-spacing:.2px">...</span>[详情]</div>
  <div class="abs" style="right:20px;top:308px;font-size:13px;line-height:20px;color:#aaa">2019-06-05</div>
</div>
<div class="row" style="top:72px"><div class="num b" style="left:420.7px;top:9.1px">1</div><div class="t" style="left:450.1px">独具匠心 中华精神——中国工艺美术大师作品<span class="el">...</span></div><div class="d">2019-06-04</div></div>
<div class="row" style="top:112px"><div class="num b" style="left:420.7px;top:9.1px">2</div><div class="t" style="left:450.1px">国家地理<span style="letter-spacing:-1.2px;margin-left:-1.2px">·</span>经典影像盛宴首日展在中华世纪坛<span class="el">...</span></div><div class="d">2019-06-04</div></div>
<div class="row" style="top:152px"><div class="num b" style="left:420.7px;top:9.1px">3</div><div class="t" style="left:450.1px">北京世园会：建设美丽中国的生动实践</div><div class="d">2019-06-04</div></div>
<div class="row" style="top:191px"><div class="num" style="left:420.7px;top:9.1px">4</div><div class="t" style="left:450.1px">北京国际摄影周中华世纪坛开幕 聚焦<span class="q l">“</span>一带一路<span class="q">”</span></div><div class="d">2019-06-04</div></div>
<div class="row" style="top:231px"><div class="num" style="left:420.7px;top:9.1px">5</div><div class="t" style="left:450.1px">国家文化产业创新实验区：以创新推动产业发展</div><div class="d">2019-06-04</div></div>
<div class="row" style="top:271px"><div class="num" style="left:420.7px;top:9.1px">6</div><div class="t" style="left:450.1px">全国设计周（节）联合发起<span class="q l">“</span>致敬中国设计<span class="el">...</span></div><div class="d">2019-05-08</div></div>
<div class="row" style="top:311px"><div class="num" style="left:420.7px;top:9.1px">7</div><div class="t" style="left:450.1px">贵州清镇试行每月连上<span class="dg">22</span>天 方便上班族和农民办事</div><div class="d">2019-05-08</div></div>
<div class="row" style="top:351px"><div class="num" style="left:420.7px;top:9.1px">8</div><div class="t" style="left:450.1px">夏衍的作品 夏衍故居在哪夏衍的</div><div class="d">2019-05-08</div></div>
<button type="button" class="pg" style="left:420px;top:400px">上一页</button><button type="button" class="pg" style="left:500px;top:400px">下一页</button>
</section>

<section class="card" style="left:989.2px;top:117px;width:499.8px;height:459px">
<a href="#" class="tab" style="left:22px">我的会议</a>
<div class="plus" style="left:337px"></div><a href="#" class="newlink" style="left:363.5px">新建会议</a>
<div class="arr l" style="left:430px;top:16.5px"></div><div class="arr r" style="left:460px;top:16.5px"></div>
<div class="hline" style="left:21.5px;right:17.8px"></div>
<div class="abs" style="left:21px;right:17.8px;top:51.0px;height:76.8px;border-bottom:1px solid #e9ebee"><div class="abs" style="left:0;top:15px;font-size:14px;line-height:22px;color:#333;white-space:nowrap">各部门经理小会议</div><div class="abs" style="left:0;top:42px;font-size:12.5px;line-height:22px;color:#929292;white-space:nowrap">会议时间:</div><div class="abs" style="left:66px;top:42px;font-size:13px;line-height:22px;color:#999;white-space:nowrap">2019-06-03</div><div class="abs" style="left:143px;top:42px;font-size:12.7px;line-height:22px;color:#999;white-space:nowrap">09:30 - 10:00</div><button type="button" class="abs mb" style="top:15px;background:#4c9ffb">同意</button><button type="button" class="abs mb" style="top:43px;background:#fd7e7e">拒绝</button></div>
<div class="abs" style="left:21px;right:17.8px;top:126.9px;height:76.8px;border-bottom:1px solid #e9ebee"><div class="abs" style="left:0;top:15px;font-size:14px;line-height:22px;color:#333;white-space:nowrap">公司年中大会</div><div class="abs" style="left:0;top:42px;font-size:12.5px;line-height:22px;color:#929292;white-space:nowrap">会议时间:</div><div class="abs" style="left:66px;top:42px;font-size:13px;line-height:22px;color:#999;white-space:nowrap">2019-06-03</div><div class="abs" style="left:143px;top:42px;font-size:12.7px;line-height:22px;color:#999;white-space:nowrap">09:30 - 10:00</div><button type="button" class="abs mb" style="top:15px;background:#5cb87a">已同意</button></div>
<div class="abs" style="left:21px;right:17.8px;top:202.8px;height:76.8px;border-bottom:1px solid #e9ebee"><div class="abs" style="left:0;top:15px;font-size:14px;line-height:22px;color:#333;white-space:nowrap">移动端改版</div><div class="abs" style="left:0;top:42px;font-size:12.5px;line-height:22px;color:#929292;white-space:nowrap">会议时间:</div><div class="abs" style="left:66px;top:42px;font-size:13px;line-height:22px;color:#999;white-space:nowrap">2019-06-03</div><div class="abs" style="left:143px;top:42px;font-size:12.7px;line-height:22px;color:#999;white-space:nowrap">09:30 - 10:00</div><button type="button" class="abs mb" style="top:42px;background:#cfcfcf">已拒绝</button></div>
<div class="abs" style="left:21px;right:17.8px;top:278.7px;height:76.8px;border-bottom:1px solid #e9ebee"><div class="abs" style="left:0;top:15px;font-size:14px;line-height:22px;color:#333;white-space:nowrap">产品使用讨论会议</div><div class="abs" style="left:0;top:42px;font-size:12.5px;line-height:22px;color:#929292;white-space:nowrap">会议时间:</div><div class="abs" style="left:66px;top:42px;font-size:13px;line-height:22px;color:#999;white-space:nowrap">2019-06-03</div><div class="abs" style="left:143px;top:42px;font-size:12.7px;line-height:22px;color:#999;white-space:nowrap">09:30 - 10:00</div><button type="button" class="abs mb" style="top:15px;background:#4c9ffb">同意</button><button type="button" class="abs mb" style="top:43px;background:#fd7e7e">拒绝</button></div>
<div class="abs" style="left:21px;right:17.8px;top:354.6px;height:76.8px;border-bottom:1px solid #e9ebee"><div class="abs" style="left:0;top:15px;font-size:14px;line-height:22px;color:#333;white-space:nowrap">产品使用讨论会议</div><div class="abs" style="left:0;top:42px;font-size:12.5px;line-height:22px;color:#929292;white-space:nowrap">会议时间:</div><div class="abs" style="left:66px;top:42px;font-size:13px;line-height:22px;color:#999;white-space:nowrap">2019-06-03</div><div class="abs" style="left:143px;top:42px;font-size:12.7px;line-height:22px;color:#999;white-space:nowrap">09:30 - 10:00</div><button type="button" class="abs mb" style="top:15px;background:#4c9ffb">同意</button><button type="button" class="abs mb" style="top:43px;background:#fd7e7e">拒绝</button></div>
</section>

<section class="card" style="left:1500px;top:117px;width:400px;height:928px">
<a href="#" class="tab" style="left:20px">我的日程</a>
<div class="abs" style="left:158px;top:0;line-height:51px;font-size:16.5px;color:#4a90e2;white-space:nowrap">2019年3月19日</div>
<div class="abs" style="left:286.5px;top:0;line-height:50px;font-size:14px;font-weight:500;color:#2a2a2a;letter-spacing:.9px;white-space:nowrap">今日</div>
<div class="arr l" style="left:329.8px;top:13px"></div><div class="arr r" style="left:359.8px;top:13px"></div>
<div class="hline" style="left:19.5px;right:21px"></div>
<div class="abs" style="left:23.2px;top:67px;width:40px;height:30px;line-height:30px;text-align:center;font-size:14px;color:#666">一</div><div class="abs" style="left:75.1px;top:67px;width:40px;height:30px;line-height:30px;text-align:center;font-size:14px;color:#666">二</div><div class="abs" style="left:126.6px;top:67px;width:40px;height:30px;line-height:30px;text-align:center;font-size:14px;color:#666">三</div><div class="abs" style="left:175.7px;top:67px;width:40px;height:30px;line-height:30px;text-align:center;font-size:14px;color:#666">四</div><div class="abs" style="left:226.2px;top:67px;width:40px;height:30px;line-height:30px;text-align:center;font-size:14px;color:#666">五</div><div class="abs" style="left:276.0px;top:67px;width:40px;height:30px;line-height:30px;text-align:center;font-size:14px;color:#666">六</div><div class="abs" style="left:326.8px;top:67px;width:40px;height:30px;line-height:30px;text-align:center;font-size:14px;color:#666">日</div>
<div class="abs" style="left:23.2px;top:105px;width:40px;height:30px;line-height:30px;text-align:center;font-size:14.4px;color:#ccc">28</div><div class="abs" style="left:75.1px;top:105px;width:40px;height:30px;line-height:30px;text-align:center;font-size:14.4px;color:#555">29</div><div class="abs" style="left:126.6px;top:105px;width:40px;height:30px;line-height:30px;text-align:center;font-size:14.4px;color:#555">30</div><div class="abs" style="left:175.7px;top:105px;width:40px;height:30px;line-height:30px;text-align:center;font-size:14.4px;color:#555">31</div><div class="abs" style="left:226.2px;top:105px;width:40px;height:30px;line-height:30px;text-align:center;font-size:14.4px;color:#555">1</div><div class="abs" style="left:276.0px;top:105px;width:40px;height:30px;line-height:30px;text-align:center;font-size:14.4px;color:#555">2</div><div class="abs" style="left:326.8px;top:105px;width:40px;height:30px;line-height:30px;text-align:center;font-size:14.4px;color:#555">3</div>
<div class="abs" style="left:23.2px;top:143px;width:40px;height:30px;line-height:30px;text-align:center;font-size:14.4px;color:#555">4</div><div class="abs" style="left:75.1px;top:143px;width:40px;height:30px;line-height:30px;text-align:center;font-size:14.4px;color:#555">5</div><div class="abs" style="left:126.6px;top:143px;width:40px;height:30px;line-height:30px;text-align:center;font-size:14.4px;color:#555">6</div><div class="abs" style="left:175.7px;top:143px;width:40px;height:30px;line-height:30px;text-align:center;font-size:14.4px;color:#555">7</div><div class="abs" style="left:226.2px;top:143px;width:40px;height:30px;line-height:30px;text-align:center;font-size:14.4px;color:#555">8</div><div class="abs" style="left:276.0px;top:143px;width:40px;height:30px;line-height:30px;text-align:center;font-size:14.4px;color:#555">9</div><div class="abs" style="left:326.8px;top:143px;width:40px;height:30px;line-height:30px;text-align:center;font-size:14.4px;color:#555">10</div>
<div class="abs" style="left:23.2px;top:181px;width:40px;height:30px;line-height:30px;text-align:center;font-size:14.4px;color:#555">11</div><div class="abs" style="left:75.1px;top:181px;width:40px;height:30px;line-height:30px;text-align:center;font-size:14.4px;color:#555">12</div><div class="abs" style="left:126.6px;top:181px;width:40px;height:30px;line-height:30px;text-align:center;font-size:14.4px;color:#555">13</div><div class="abs" style="left:175.7px;top:181px;width:40px;height:30px;line-height:30px;text-align:center;font-size:14.4px;color:#555">14</div><div class="abs" style="left:226.2px;top:181px;width:40px;height:30px;line-height:30px;text-align:center;font-size:14.4px;color:#555">15</div><div class="abs" style="left:276.0px;top:181px;width:40px;height:30px;line-height:30px;text-align:center;font-size:14.4px;color:#555">16</div><div class="abs" style="left:326.8px;top:181px;width:40px;height:30px;line-height:30px;text-align:center;font-size:14.4px;color:#555">17</div>
<div class="abs" style="left:23.2px;top:219px;width:40px;height:30px;line-height:30px;text-align:center;font-size:14.4px;color:#555">18</div><div class="abs" style="left:83.1px;top:222px;width:24px;height:24px;border-radius:50%;background:#4a90e2"></div><div class="abs" style="left:75.1px;top:219px;width:40px;height:30px;line-height:30px;text-align:center;font-size:14.4px;color:#fff">19</div><div class="abs" style="left:126.6px;top:219px;width:40px;height:30px;line-height:30px;text-align:center;font-size:14.4px;color:#555">20</div><div class="abs" style="left:175.7px;top:219px;width:40px;height:30px;line-height:30px;text-align:center;font-size:14.4px;color:#555">21</div><div class="abs" style="left:226.2px;top:219px;width:40px;height:30px;line-height:30px;text-align:center;font-size:14.4px;color:#555">22</div><div class="abs" style="left:276.0px;top:219px;width:40px;height:30px;line-height:30px;text-align:center;font-size:14.4px;color:#555">23</div><div class="abs" style="left:326.8px;top:219px;width:40px;height:30px;line-height:30px;text-align:center;font-size:14.4px;color:#555">24</div>
<div class="abs" style="left:23.2px;top:257px;width:40px;height:30px;line-height:30px;text-align:center;font-size:14.4px;color:#555">25</div><div class="abs" style="left:75.1px;top:257px;width:40px;height:30px;line-height:30px;text-align:center;font-size:14.4px;color:#555">26</div><div class="abs" style="left:126.6px;top:257px;width:40px;height:30px;line-height:30px;text-align:center;font-size:14.4px;color:#555">27</div><div class="abs" style="left:175.7px;top:257px;width:40px;height:30px;line-height:30px;text-align:center;font-size:14.4px;color:#555">28</div><div class="abs" style="left:226.2px;top:257px;width:40px;height:30px;line-height:30px;text-align:center;font-size:14.4px;color:#555">29</div><div class="abs" style="left:276.0px;top:257px;width:40px;height:30px;line-height:30px;text-align:center;font-size:14.4px;color:#555">30</div><div class="abs" style="left:326.8px;top:257px;width:40px;height:30px;line-height:30px;text-align:center;font-size:14.4px;color:#555">1</div>
<div class="abs" style="left:20px;top:320px;line-height:54px;font-size:16px;color:#333;white-space:nowrap">日程管理</div>
<div class="arr l fill" style="left:329px;top:335px"></div><div class="arr r" style="left:359px;top:335px"></div>
<div class="hline" style="top:369px;left:19px;right:21.5px"></div>
<div class="abs" style="top:384px;line-height:22px;font-size:13px;color:#666;white-space:nowrap;left:19px">叶子,您好!</div><div class="abs" style="top:384px;line-height:22px;font-size:13px;color:#666;white-space:nowrap;left:81.5px">今日您有</div><div class="abs" style="left:136.5px;top:386px;width:16.5px;height:16.5px;border-radius:50%;background:#f02b2b;color:#fff;font-weight:bold;font-size:12px;line-height:16.5px;text-align:center">3</div><div class="abs" style="top:384px;line-height:22px;font-size:13px;color:#666;white-space:nowrap;left:156.5px">个议程!</div>
<div class="abs" style="left:19px;top:429.0px;width:359.3px;height:69.5px;border-radius:7px;background:#f4f9fe"><div class="abs" style="left:9.6px;top:18.6px;width:6px;height:6px;border-radius:50%;background:#4a90e2"></div><div class="abs" style="left:22px;top:9.8px;font-size:14px;line-height:24px;color:#333;white-space:nowrap">各部门经理小会议</div><div class="abs" style="right:19.5px;top:10.1px;font-size:12px;line-height:24px;color:#777;white-space:nowrap">客户会议室</div><div class="abs" style="left:22px;top:38.1px;font-size:12.8px;line-height:22px;color:#666;white-space:nowrap">2019-06-03</div><div class="abs" style="left:99px;top:38.1px;font-size:12.6px;line-height:22px;color:#666;white-space:nowrap">09:30 - 10:00</div></div>
<div class="abs" style="left:19px;top:514.3px;width:359.3px;height:69.5px;border-radius:7px;background:#4a90e2"><div class="abs" style="left:9.6px;top:20.6px;width:6px;height:6px;border-radius:50%;background:#fff"></div><div class="abs" style="left:22px;top:11.8px;font-size:14px;line-height:24px;color:#fff;white-space:nowrap">产品使用讨论会议（悬浮时）</div><div class="abs" style="right:19.5px;top:12.1px;font-size:12px;line-height:24px;color:#fff;white-space:nowrap">大会议室</div><div class="abs" style="left:22px;top:40.1px;font-size:12.8px;line-height:22px;color:#fff;white-space:nowrap">2019-06-03</div><div class="abs" style="left:99px;top:40.1px;font-size:12.6px;line-height:22px;color:#fff;white-space:nowrap">09:30 - 10:00</div></div>
<div class="abs" style="left:19px;top:599.6px;width:359.3px;height:69.5px;border-radius:7px;background:#f4f9fe"><div class="abs" style="left:9.6px;top:20.0px;width:6px;height:6px;border-radius:50%;background:#4a90e2"></div><div class="abs" style="left:22px;top:11.2px;font-size:14px;line-height:24px;color:#333;white-space:nowrap">项目需求调研会议</div><div class="abs" style="right:19.5px;top:11.5px;font-size:12px;line-height:24px;color:#777;white-space:nowrap">客户会议室</div><div class="abs" style="left:22px;top:38.8px;font-size:12.8px;line-height:22px;color:#666;white-space:nowrap">2019-06-03</div><div class="abs" style="left:99px;top:38.8px;font-size:12.6px;line-height:22px;color:#666;white-space:nowrap">09:30 - 10:00</div></div>
</section>

<section class="card" style="left:100.1px;top:586px;width:880.2px;height:459px">
<a href="#" class="tab on" style="left:20px;line-height:51.5px;width:110.7px">我的待办（12）</a>
<a href="#" class="tab" style="left:165px;line-height:51.5px">我的待阅（6）</a>
<a href="#" class="tab" style="left:289px;line-height:51.5px">我的已办（8）</a>
<a href="#" class="tab" style="left:413px;line-height:51.5px">我的已阅（3）</a>
<a href="#" class="tab" style="left:537px;line-height:51.5px">我的拟稿（1）</a>
<div class="plus" style="left:777.8px;top:18.6px"></div><a href="#" class="newlink" style="left:803.9px;line-height:54.6px">新建流程</a>
<div class="hline" style="right:21.5px"></div>
<div class="row" style="top:61px;"><div class="num b" style="left:20px;top:9.5px">1</div><div class="t" style="left:50px;">借一万 赔了一套房 这个交易能让你倾家荡产！</div><div class="abs" style="left:588px;top:2px;font-size:13.3px;color:#666">苏娜</div><div class="abs" style="left:680.4px;top:2px;font-size:13.3px;color:#666">公司发文</div><div class="d" style="right:20.6px;top:.9px">2019-05-08</div></div>
<div class="row" style="top:101px;"><div class="num b" style="left:20px;top:9.5px">2</div><div class="t" style="left:50px;">民生<span class="q l">“</span>七有<span class="q">”</span>：盘点十九大回应的人民新期待</div><div class="abs" style="left:588px;top:2px;font-size:13.3px;color:#666">杨芳</div><div class="abs" style="left:680.4px;top:2px;font-size:13.3px;color:#666">请假审批</div><div class="d" style="right:20.6px;top:.9px">2019-05-08</div></div>
<div class="row" style="top:141px;background:#f5f6f8;"><div class="num b" style="left:20px;top:9.5px">3</div><div class="t" style="left:50px;color:#4a90e2">父亲在抢救他却在隔壁救别人 当事医生回应质疑</div><div class="abs" style="left:588px;top:2px;font-size:13.3px;color:#666">谢军</div><div class="abs" style="left:680.4px;top:2px;font-size:13.3px;color:#666">报销申请</div><div class="d" style="right:20.6px;top:.9px">2019-05-08</div></div>
<div class="row" style="top:181px;"><div class="num" style="left:20px;top:9.5px">4</div><div class="t" style="left:50px;">宁波口岸引进<span class="q l">“</span>汽车侦探<span class="q">”</span> 问题车无所遁形</div><div class="abs" style="left:588px;top:2px;font-size:13.3px;color:#666">赵娜</div><div class="abs" style="left:680.4px;top:2px;font-size:13.3px;color:#666">部门发文</div><div class="d" style="right:20.6px;top:.9px">2019-05-08</div></div>
<div class="row" style="top:221px;"><div class="num" style="left:20px;top:9.5px">5</div><div class="t" style="left:50px;">贵州清镇试行每月连上<span class="dg">22</span>天 方便上班族和农民办事</div><div class="abs" style="left:588px;top:2px;font-size:13.3px;color:#666">常明</div><div class="abs" style="left:680.4px;top:2px;font-size:13.3px;color:#666">公司发文</div><div class="d" style="right:20.6px;top:.9px">2019-05-08</div></div>
<div class="row" style="top:261px;"><div class="num" style="left:20px;top:9.5px">6</div><div class="t" style="left:50px;">夏衍的作品 夏衍故居在哪夏衍的</div><div class="abs" style="left:588px;top:2px;font-size:13.3px;color:#666">史杰</div><div class="abs" style="left:680.4px;top:2px;font-size:13.3px;color:#666">请假审批</div><div class="d" style="right:20.6px;top:.9px">2019-05-08</div></div>
<div class="row" style="top:301px;"><div class="num" style="left:20px;top:9.5px">7</div><div class="t" style="left:50px;">日本化妆品高丝在华变策：停止本土化生产</div><div class="abs" style="left:588px;top:2px;font-size:13.3px;color:#666">张超</div><div class="abs" style="left:680.4px;top:2px;font-size:13.3px;color:#666">报销申请</div><div class="d" style="right:20.6px;top:.9px">2019-05-08</div></div>
<div class="row" style="top:341px;"><div class="num" style="left:20px;top:9.5px">8</div><div class="t" style="left:50px;">西湖发现黑天鹅，它们来自哪里</div><div class="abs" style="left:588px;top:2px;font-size:13.3px;color:#666">郑洋</div><div class="abs" style="left:680.4px;top:2px;font-size:13.3px;color:#666">部门发文</div><div class="d" style="right:20.6px;top:.9px">2019-05-08</div></div>
<button type="button" class="pg" style="left:20px;top:391px">上一页</button><button type="button" class="pg" style="left:100px;top:391px">下一页</button>
</section>

<section class="card" style="left:989.2px;top:586px;width:499.8px;height:459px">
<a href="#" class="tab on" style="left:21px;line-height:53px;width:63px">我的文件</a><a href="#" class="tab" style="left:118px;line-height:53px">云文件</a>
<div class="arr l" style="left:430px;top:16.3px"></div><div class="arr r" style="left:460px;top:16.3px"></div>
<div class="hline" style="left:21.5px;right:18.5px"></div>
<div class="abs" style="left:20px;right:19.5px;top:52px;height:50px;border-bottom:1px solid #ebedf0"><div class="abs" style="left:0;top:9.6px"><svg width="30" height="25.8" viewBox="0 0 30 25.8" style="margin-top:2.2px"><path d="M0 3 Q0 0 3 0 H14 Q16.5 0 17.5 2.5 L18.5 5 H0 Z" fill="#e3a312"/><rect x="0" y="3.6" width="30" height="22.2" rx="2.2" fill="#fdc92f"/></svg></div><div class="abs" style="left:46px;top:0;font-size:14px;line-height:56.4px;color:#333;white-space:nowrap">文件夹1.1</div><svg class="abs" style="right:0;top:21.6px" width="18" height="8" viewBox="0 0 18 8"><circle cx="3" cy="4" r="1.9" fill="#858585"/><circle cx="9" cy="4" r="1.9" fill="#858585"/><circle cx="15" cy="4" r="1.9" fill="#858585"/></svg></div>
<div class="abs" style="left:20px;right:19.5px;top:102px;height:50px;border-bottom:1px solid #ebedf0"><div class="abs" style="left:0;top:9.6px"><svg width="30" height="29.4" viewBox="0 0 30 29.4"><path d="M4.2 0 H20.5 L27.3 6.8 V27.9 Q27.3 29.4 25.8 29.4 H4.2 Q2.7 29.4 2.7 27.9 V1.5 Q2.7 0 4.2 0 Z" fill="#dcf1dd"/><path d="M20.5 0 L27.3 6.8 H21.5 Q20.5 6.8 20.5 5.8 Z" fill="#b9e2bc"/><text x="7.2" y="16.6" font-size="9.5" font-weight="bold" fill="#2f9a48">E</text><rect x="14.8" y="9.6" width="6.6" height="2.6" rx=".6" fill="#2f9a48"/><rect x="14.8" y="13.6" width="6.6" height="2.6" rx=".6" fill="#2f9a48"/><rect x="0" y="18" width="30" height="9.2" rx="1.8" fill="#3a9d4a"/><text x="15" y="25" font-size="6.4" font-weight="bold" fill="#fff" text-anchor="middle">XLS</text></svg></div><div class="abs" style="left:46px;top:0;font-size:14px;line-height:56.4px;color:#333;white-space:nowrap">Excel表格</div><svg class="abs" style="right:0;top:21.6px" width="18" height="8" viewBox="0 0 18 8"><circle cx="3" cy="4" r="1.9" fill="#3f88e0"/><circle cx="9" cy="4" r="1.9" fill="#3f88e0"/><circle cx="15" cy="4" r="1.9" fill="#3f88e0"/></svg></div>
<div class="abs" style="left:20px;right:19.5px;top:152px;height:50px;border-bottom:1px solid #ebedf0"><div class="abs" style="left:0;top:9.6px"><svg width="30" height="29.4" viewBox="0 0 30 29.4"><path d="M4.2 0 H20.5 L27.3 6.8 V27.9 Q27.3 29.4 25.8 29.4 H4.2 Q2.7 29.4 2.7 27.9 V1.5 Q2.7 0 4.2 0 Z" fill="#e6ebf1"/><path d="M20.5 0 L27.3 6.8 H21.5 Q20.5 6.8 20.5 5.8 Z" fill="#cdd6e1"/><path d="M11.5 8.5 L18.5 15.5 M18.5 8.5 L11.5 15.5 M10.5 12 H19.5 M15 7.5 V16.5 M12.8 8 L17.2 16 M17.2 8 L12.8 16" stroke="#90a2ba" stroke-width=".9"/><rect x="0" y="18" width="30" height="9.2" rx="1.8" fill="#8a9db5"/><text x="15" y="25" font-size="6.4" font-weight="bold" fill="#fff" text-anchor="middle">PNG</text></svg></div><div class="abs" style="left:46px;top:0;font-size:14px;line-height:56.4px;color:#333;white-space:nowrap">PNG-图片</div><svg class="abs" style="right:0;top:21.6px" width="18" height="8" viewBox="0 0 18 8"><circle cx="3" cy="4" r="1.9" fill="#858585"/><circle cx="9" cy="4" r="1.9" fill="#858585"/><circle cx="15" cy="4" r="1.9" fill="#858585"/></svg></div>
<div class="abs" style="left:20px;right:19.5px;top:202px;height:50px;border-bottom:1px solid #ebedf0"><div class="abs" style="left:0;top:9.6px"><svg width="30" height="29.4" viewBox="0 0 30 29.4"><path d="M4.2 0 H20.5 L27.3 6.8 V27.9 Q27.3 29.4 25.8 29.4 H4.2 Q2.7 29.4 2.7 27.9 V1.5 Q2.7 0 4.2 0 Z" fill="#e6ebf1"/><path d="M20.5 0 L27.3 6.8 H21.5 Q20.5 6.8 20.5 5.8 Z" fill="#cdd6e1"/><rect x="10.8" y="7.2" width="8.6" height="7.4" rx="1.2" fill="none" stroke="#8194ad" stroke-width="1.3"/><path d="M12 13.6 L14.3 11 L16 12.6 L17.2 11.8 L18.4 13.6 Z" fill="#8194ad"/><rect x="0" y="18" width="30" height="9.2" rx="1.8" fill="#8a9db5"/><text x="15" y="25" font-size="6.4" font-weight="bold" fill="#fff" text-anchor="middle">JPEG</text></svg></div><div class="abs" style="left:46px;top:0;font-size:14px;line-height:56.4px;color:#333;white-space:nowrap">JPG图-移动端改版讨论会</div><svg class="abs" style="right:0;top:21.6px" width="18" height="8" viewBox="0 0 18 8"><circle cx="3" cy="4" r="1.9" fill="#858585"/><circle cx="9" cy="4" r="1.9" fill="#858585"/><circle cx="15" cy="4" r="1.9" fill="#858585"/></svg></div>
<div class="abs" style="left:20px;right:19.5px;top:252px;height:50px;border-bottom:1px solid #ebedf0"><div class="abs" style="left:0;top:9.6px"><svg width="30" height="29.4" viewBox="0 0 30 29.4"><path d="M4.2 0 H20.5 L27.3 6.8 V27.9 Q27.3 29.4 25.8 29.4 H4.2 Q2.7 29.4 2.7 27.9 V1.5 Q2.7 0 4.2 0 Z" fill="#fde0d4"/><path d="M20.5 0 L27.3 6.8 H21.5 Q20.5 6.8 20.5 5.8 Z" fill="#f9c2ab"/><circle cx="14.6" cy="10.6" r="4.6" fill="#e8561b"/><path d="M15.4 9.8 V5 A4.8 4.8 0 0 1 20.2 9.8 Z" fill="#e8561b" stroke="#fde3d8" stroke-width="1"/><rect x="0" y="18" width="30" height="9.2" rx="1.8" fill="#e8561b"/><text x="15" y="25" font-size="6.4" font-weight="bold" fill="#fff" text-anchor="middle">PPT</text></svg></div><div class="abs" style="left:46px;top:0;font-size:14px;line-height:56.4px;color:#333;white-space:nowrap">PPT-移动端改版讨论会</div><svg class="abs" style="right:0;top:21.6px" width="18" height="8" viewBox="0 0 18 8"><circle cx="3" cy="4" r="1.9" fill="#858585"/><circle cx="9" cy="4" r="1.9" fill="#858585"/><circle cx="15" cy="4" r="1.9" fill="#858585"/></svg></div>
<div class="abs" style="left:20px;right:19.5px;top:302px;height:50px;border-bottom:1px solid #ebedf0"><div class="abs" style="left:0;top:9.6px"><svg width="30" height="29.4" viewBox="0 0 30 29.4"><path d="M4.2 0 H20.5 L27.3 6.8 V27.9 Q27.3 29.4 25.8 29.4 H4.2 Q2.7 29.4 2.7 27.9 V1.5 Q2.7 0 4.2 0 Z" fill="#e6ebf1"/><path d="M20.5 0 L27.3 6.8 H21.5 Q20.5 6.8 20.5 5.8 Z" fill="#cdd6e1"/><path d="M15.2 1 V14" stroke="#8a9bb0" stroke-width="2.4" stroke-dasharray="1.6 1.3"/><rect x="13.3" y="12" width="3.8" height="4.6" rx="1" fill="#8a9bb0"/><rect x="0" y="18" width="30" height="9.2" rx="1.8" fill="#8a9db5"/><text x="15" y="25" font-size="6.4" font-weight="bold" fill="#fff" text-anchor="middle">ZIP</text></svg></div><div class="abs" style="left:46px;top:0;font-size:14px;line-height:56.4px;color:#333;white-space:nowrap">ZIP压缩包</div><svg class="abs" style="right:0;top:21.6px" width="18" height="8" viewBox="0 0 18 8"><circle cx="3" cy="4" r="1.9" fill="#858585"/><circle cx="9" cy="4" r="1.9" fill="#858585"/><circle cx="15" cy="4" r="1.9" fill="#858585"/></svg></div>
<div class="abs" style="left:20px;right:19.5px;top:352px;height:50px;border-bottom:1px solid #ebedf0"><div class="abs" style="left:0;top:9.6px"><svg width="30" height="29.4" viewBox="0 0 30 29.4"><path d="M4.2 0 H20.5 L27.3 6.8 V27.9 Q27.3 29.4 25.8 29.4 H4.2 Q2.7 29.4 2.7 27.9 V1.5 Q2.7 0 4.2 0 Z" fill="#dcecfb"/><path d="M20.5 0 L27.3 6.8 H21.5 Q20.5 6.8 20.5 5.8 Z" fill="#b5d6f5"/><text x="6.8" y="15" font-size="9.6" font-weight="bold" fill="#1e7fd6">W</text><rect x="16" y="7.6" width="6" height="1.6" fill="#1e7fd6"/><rect x="16" y="10.6" width="6" height="1.6" fill="#1e7fd6"/><rect x="7.4" y="15.4" width="14.6" height="1.4" fill="#1e7fd6"/><rect x="0" y="18" width="30" height="9.2" rx="1.8" fill="#1e7fd6"/><text x="15" y="25" font-size="6.4" font-weight="bold" fill="#fff" text-anchor="middle">DOC</text></svg></div><div class="abs" style="left:46px;top:0;font-size:14px;line-height:56.4px;color:#333;white-space:nowrap">Word文档</div><svg class="abs" style="right:0;top:21.6px" width="18" height="8" viewBox="0 0 18 8"><circle cx="3" cy="4" r="1.9" fill="#858585"/><circle cx="9" cy="4" r="1.9" fill="#858585"/><circle cx="15" cy="4" r="1.9" fill="#858585"/></svg></div>
<div class="abs" style="left:20px;right:19.5px;top:402px;height:50px;border-bottom:1px solid #ebedf0"><div class="abs" style="left:0;top:9.6px"><svg width="30" height="29.4" viewBox="0 0 30 29.4"><path d="M4.2 0 H20.5 L27.3 6.8 V27.9 Q27.3 29.4 25.8 29.4 H4.2 Q2.7 29.4 2.7 27.9 V1.5 Q2.7 0 4.2 0 Z" fill="#efe0f3"/><path d="M20.5 0 L27.3 6.8 H21.5 Q20.5 6.8 20.5 5.8 Z" fill="#dcbfe5"/><path d="M11.6 6.8 L19.6 11.2 L11.6 15.6 Z" fill="#8e3aa6"/><rect x="0" y="18" width="30" height="9.2" rx="1.8" fill="#8e3aa6"/><text x="15" y="25" font-size="6.4" font-weight="bold" fill="#fff" text-anchor="middle">MP4</text></svg></div><div class="abs" style="left:46px;top:0;font-size:14px;line-height:56.4px;color:#333;white-space:nowrap">小视频-移动端改版讨论会</div><svg class="abs" style="right:0;top:21.6px" width="18" height="8" viewBox="0 0 18 8"><circle cx="3" cy="4" r="1.9" fill="#858585"/><circle cx="9" cy="4" r="1.9" fill="#858585"/><circle cx="15" cy="4" r="1.9" fill="#858585"/></svg></div>
</section>

</div>
</body>
</html>
